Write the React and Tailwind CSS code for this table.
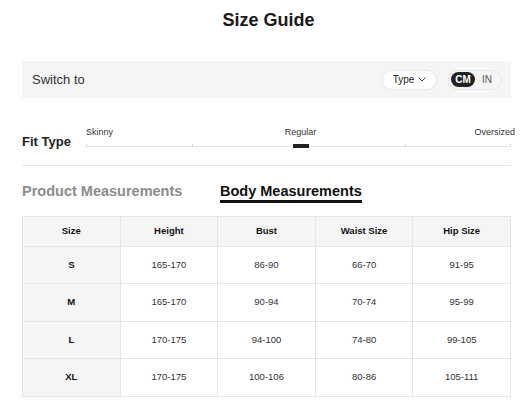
import React from 'react'

const HEADERS = ['Size', 'Height', 'Bust', 'Waist Size', 'Hip Size']

const ROWS = [
  { size: 'S', height: '165-170', bust: '86-90', waist: '66-70', hip: '91-95' },
  { size: 'M', height: '165-170', bust: '90-94', waist: '70-74', hip: '95-99' },
  { size: 'L', height: '170-175', bust: '94-100', waist: '74-80', hip: '99-105' },
  { size: 'XL', height: '170-175', bust: '100-106', waist: '80-86', hip: '105-111' },
]

const App = () => {
  return (
    <div className="w-[527px] h-[402px] bg-white pl-[22px] pr-[16px] text-[#222] font-['Liberation_Sans',Arial,sans-serif] overflow-hidden">
      <div className="h-[40px] flex items-center justify-center">
        <h1 className="text-[18px] font-bold text-[#1a1a1a] ml-[4px]">Size Guide</h1>
      </div>

      <div className="mt-[21px] h-[37px] bg-[#f5f5f5] pl-[10px] pr-[9px] flex items-center justify-between">
        <span className="text-[13px] text-[#333]">Switch to</span>
        <div className="flex items-center gap-[11px]">
          <button className="h-[20px] w-[55px] rounded-full bg-white border border-[#e8e8e8] flex items-center justify-center gap-[4px] text-[10px] text-[#222]">
            Type
            <svg width="8" height="5" viewBox="0 0 8 5" fill="none" stroke="#333" strokeWidth="0.9">
              <path d="M0.5 0.5 L4 4 L7.5 0.5" />
            </svg>
          </button>
          <div className="h-[20px] w-[54px] rounded-full bg-[#f5f5f5] border border-[#e8e8e8] flex items-center px-[2px]">
            <span className="h-[15px] w-[24px] rounded-full bg-[#222] text-white text-[10px] font-bold flex items-center justify-center">CM</span>
            <span className="flex-1 text-center text-[10px] text-[#555]">IN</span>
          </div>
        </div>
      </div>

      <div className="mt-[28px] flex items-end">
        <span className="w-[64px] text-[13px] font-bold text-[#222] leading-[16px] mb-[-2px]">Fit Type</span>
        <div className="flex-1">
          <div className="grid grid-cols-3 text-[9px] leading-[12px] text-[#333] -mr-[4px]">
            <span>Skinny</span>
            <span className="text-center">Regular</span>
            <span className="text-right">Oversized</span>
          </div>
          <div className="relative h-[10px]">
            <div className="absolute left-0 right-0 bottom-[1px] h-[1px] bg-[#e3e3e3]" />
            <div className="absolute left-0 bottom-[1px] w-[1px] h-[3px] bg-[#d6d6d6]" />
            <div className="absolute left-1/4 bottom-[1px] w-[1px] h-[3px] bg-[#d6d6d6]" />
            <div className="absolute left-3/4 bottom-[1px] w-[1px] h-[3px] bg-[#d6d6d6]" />
            <div className="absolute right-0 bottom-[1px] w-[1px] h-[3px] bg-[#d6d6d6]" />
            <div className="absolute left-[207px] bottom-0 w-[16px] h-[4px] bg-[#222]" />
          </div>
        </div>
      </div>

      <div className="mt-[17px] border-t border-[#e5e5e5]" />

      <div className="mt-[16px] flex items-start">
        <span className="w-[198px] text-[14.5px] font-bold leading-[18px] text-[#8c8c8c]">Product Measurements</span>
        <span className="text-[14.5px] font-bold leading-[18px] text-[#111] border-b-[3px] border-[#111]">Body Measurements</span>
      </div>

      <table className="mt-[13px] w-full table-fixed border-collapse text-[9.5px]">
        <thead>
          <tr className="h-[30px] bg-[#f5f5f5]">
            {HEADERS.map((h) => (
              <th key={h} className="border border-[#e5e5e5] font-bold text-[#111]">{h}</th>
            ))}
          </tr>
        </thead>
        <tbody>
          {ROWS.map((r, i) => (
            <tr key={r.size} className={i % 2 === 0 ? 'h-[37px]' : 'h-[38px]'}>
              <td className="border border-[#e5e5e5] bg-[#f5f5f5] text-center font-bold text-[#111]">{r.size}</td>
              <td className="border border-[#e5e5e5] text-center text-[#333]">{r.height}</td>
              <td className="border border-[#e5e5e5] text-center text-[#333]">{r.bust}</td>
              <td className="border border-[#e5e5e5] text-center text-[#333]">{r.waist}</td>
              <td className="border border-[#e5e5e5] text-center text-[#333]">{r.hip}</td>
            </tr>
          ))}
        </tbody>
      </table>
    </div>
  )
}

export default App
